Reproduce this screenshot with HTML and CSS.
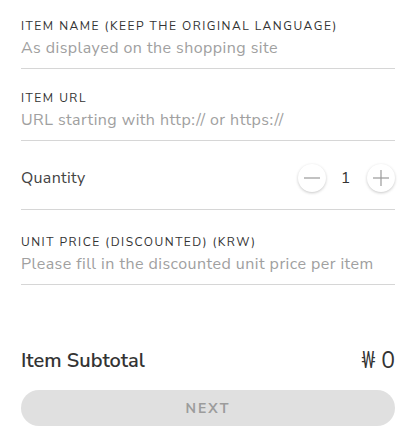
FILE: index.html
```html
<!DOCTYPE html>
<html>
<head>
<meta charset="utf-8">
<link rel="stylesheet" href="styles.css">
</head>
<body>
<div class="page">
  <div class="field first">
    <div class="label">ITEM NAME (KEEP THE ORIGINAL LANGUAGE)</div>
    <div class="input">As displayed on the shopping site</div>
  </div>
  <div class="field">
    <div class="label">ITEM URL</div>
    <div class="input">URL starting with http:// or https://</div>
  </div>
  <div class="qty-row">
    <div class="qty-label">Quantity</div>
    <div class="stepper">
      <div class="step-btn">
        <svg width="28" height="28" viewBox="0 0 28 28"><line x1="6" y1="14" x2="22" y2="14" stroke="#9a9a9a" stroke-width="1.2"/></svg>
      </div>
      <div class="qty-value">1</div>
      <div class="step-btn">
        <svg width="28" height="28" viewBox="0 0 28 28"><line x1="6" y1="14" x2="22" y2="14" stroke="#9a9a9a" stroke-width="1.2"/><line x1="14" y1="6" x2="14" y2="22" stroke="#9a9a9a" stroke-width="1.2"/></svg>
      </div>
    </div>
  </div>
  <div class="field price">
    <div class="label">UNIT PRICE (DISCOUNTED) (KRW)</div>
    <div class="input">Please fill in the discounted unit price per item</div>
  </div>
  <div class="subtotal">
    <div class="sub-label">Item Subtotal</div>
    <div class="sub-value">₩ 0</div>
  </div>
  <div class="next-btn">NEXT</div>
</div>
</body>
</html>
```
FILE: styles.css
```css
* { box-sizing: border-box; }
html, body { margin: 0; padding: 0; background: #fff; }
body { font-family: "Nunito Sans", Lato, "Liberation Sans", sans-serif; color: #333; }
.page { padding: 0 21px; width: 416px; }
.field { border-bottom: 1px solid #d6d6d6; padding: 21px 0 10px; }
.field.first { padding-top: 18px; }
.field.price { padding-top: 24px; }
.label { font-size: 12px; line-height: 16px; letter-spacing: 1.5px; color: #333; }
.input { font-size: 16px; line-height: 20px; color: #a0a0a0; margin-top: 4px; letter-spacing: 0.45px; }
.qty-row { display: flex; align-items: center; justify-content: space-between; border-bottom: 1px solid #d6d6d6; padding: 23px 0 17px; }
.qty-label { font-size: 16px; color: #444; letter-spacing: 0.3px; }
.stepper { display: flex; align-items: center; gap: 13px; }
.step-btn { width: 28px; height: 28px; border-radius: 50%; background: #fff; box-shadow: 0 1px 3px rgba(0,0,0,0.22); display: flex; }
.qty-value { font-size: 16px; width: 15px; text-align: center; color: #333; padding-right: 2px; }
.subtotal { display: flex; justify-content: space-between; align-items: center; margin-top: 60px; }
.sub-label { font-size: 20px; font-weight: 600; color: #333; }
.sub-value { font-size: 23px; color: #333; }
.next-btn { margin-top: 14px; height: 36px; border-radius: 18px; background: #e0e0e0; color: #9c9c9c; font-size: 14px; font-weight: 700; letter-spacing: 2px; display: flex; align-items: center; justify-content: center; }
```
